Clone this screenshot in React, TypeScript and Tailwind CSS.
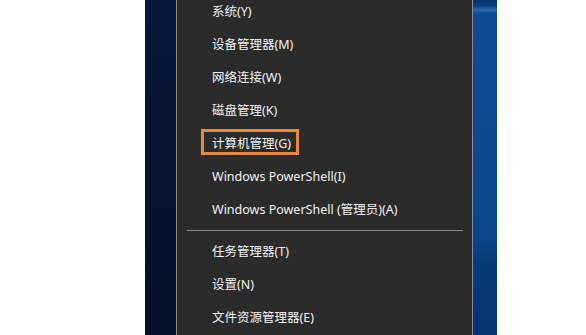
import React from "react";

const groupA = [
  "系统(Y)",
  "设备管理器(M)",
  "网络连接(W)",
  "磁盘管理(K)",
  "计算机管理(G)",
  "Windows PowerShell(I)",
  "Windows PowerShell (管理员)(A)",
];
const groupB = ["任务管理器(T)", "设置(N)", "文件资源管理器(E)"];

function Row({ label, boxed }: { label: string; boxed?: boolean }) {
  return (
    <div className="relative flex h-[33px] items-center pl-[35px] text-[12.5px] text-[#f2f2f2]">
      {boxed && (
        <div className="absolute left-[24px] top-[1px] h-[26px] w-[98px] border-[3px] border-[#e8883c]" />
      )}
      <span className="relative whitespace-nowrap">{label}</span>
    </div>
  );
}

export default function App() {
  return (
    <div
      className="flex h-[335px] w-[586px] overflow-hidden bg-white"
      style={{ fontFamily: '"Noto Sans", "Noto Sans CJK SC", sans-serif' }}
    >
      <div className="w-[145px] shrink-0 bg-white" />
      <div className="w-[31px] shrink-0 bg-gradient-to-b from-[#05183a] via-[#04142f] to-[#03112a]" />
      <div className="w-[297px] shrink-0 border-x border-[#8c8c8c] bg-[#2b2b2b]">
        <div className="-mt-[4px] flex flex-col">
          {groupA.map((l) => (
            <Row key={l} label={l} boxed={l === "计算机管理(G)"} />
          ))}
          <div className="flex h-[9px] items-start pt-[3px] pl-[10px] pr-[9px]">
            <div className="h-px w-full bg-[#8a8a8a]" />
          </div>
          {groupB.map((l) => (
            <Row key={l} label={l} />
          ))}
        </div>
      </div>
      <div className="w-[24px] shrink-0 bg-[linear-gradient(180deg,#06336c_0px,#0a3f80_6px,#2b69b0_10px,#0c4a92_14px,#0b4a90_120px,#0a4689_240px,#073a78_262px,#063470_335px)]" />
      <div className="flex-1 bg-white" />
    </div>
  );
}
